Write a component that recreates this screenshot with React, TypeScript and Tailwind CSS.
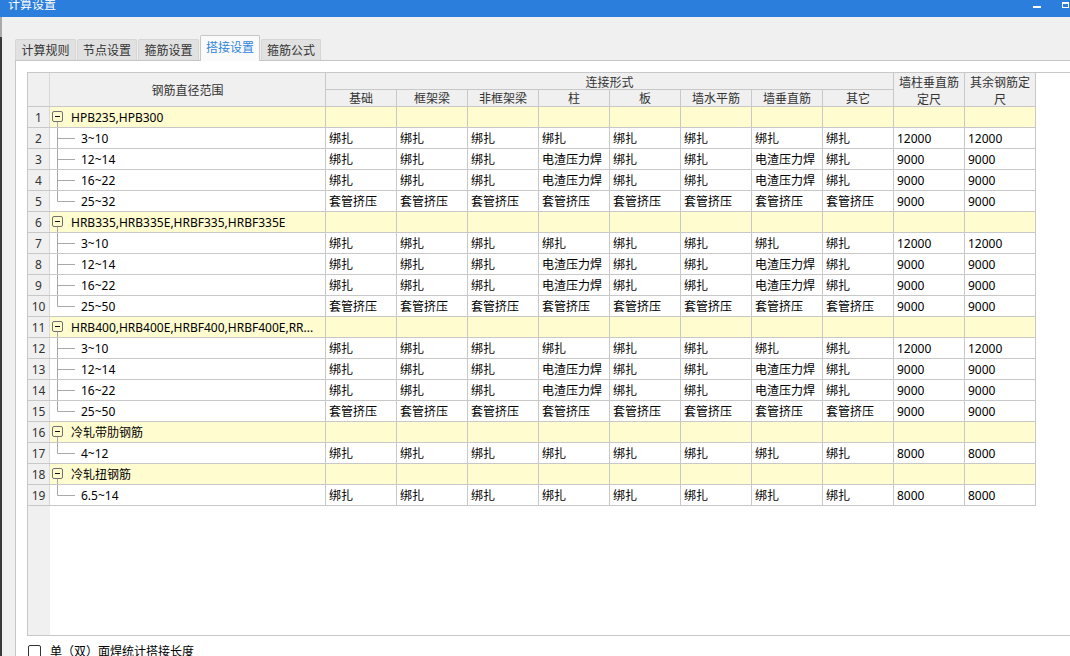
import React from "react";

const B = "绑扎";
const D = "电渣压力焊";
const T = "套管挤压";
const v1 = [B, B, B, B, B, B, B, B, "12000", "12000"];
const v2 = [B, B, B, D, B, B, D, B, "9000", "9000"];
const v4 = [T, T, T, T, T, T, T, T, "9000", "9000"];
const v8 = [B, B, B, B, B, B, B, B, "8000", "8000"];

type Row =
  | { kind: "group"; name: string }
  | { kind: "child"; name: string; last: boolean; vals: string[] };

const rows: Row[] = [
  { kind: "group", name: "HPB235,HPB300" },
  { kind: "child", name: "3~10", last: false, vals: v1 },
  { kind: "child", name: "12~14", last: false, vals: v2 },
  { kind: "child", name: "16~22", last: false, vals: v2 },
  { kind: "child", name: "25~32", last: true, vals: v4 },
  { kind: "group", name: "HRB335,HRB335E,HRBF335,HRBF335E" },
  { kind: "child", name: "3~10", last: false, vals: v1 },
  { kind: "child", name: "12~14", last: false, vals: v2 },
  { kind: "child", name: "16~22", last: false, vals: v2 },
  { kind: "child", name: "25~50", last: true, vals: v4 },
  { kind: "group", name: "HRB400,HRB400E,HRBF400,HRBF400E,RR..." },
  { kind: "child", name: "3~10", last: false, vals: v1 },
  { kind: "child", name: "12~14", last: false, vals: v2 },
  { kind: "child", name: "16~22", last: false, vals: v2 },
  { kind: "child", name: "25~50", last: true, vals: v4 },
  { kind: "group", name: "冷轧带肋钢筋" },
  { kind: "child", name: "4~12", last: true, vals: v8 },
  { kind: "group", name: "冷轧扭钢筋" },
  { kind: "child", name: "6.5~14", last: true, vals: v8 },
];

const subHeads = ["基础", "框架梁", "非框架梁", "柱", "板", "墙水平筋", "墙垂直筋", "其它"];

function GroupName({ name }: { name: string }) {
  return (
    <div className="flex h-full items-start overflow-hidden whitespace-nowrap pl-[2px]">
      <svg width="11" height="20" className="shrink-0">
        <rect x="0.5" y="4.5" width="10" height="10" rx="1.5" fill="none" stroke="#707070" />
        <line x1="3" y1="9.5" x2="8" y2="9.5" stroke="#111" />
        <line x1="5.5" y1="15" x2="5.5" y2="20" stroke="#a8a8a8" />
      </svg>
      <span className="ml-[8px] leading-[22px]">{name}</span>
    </div>
  );
}

function ChildName({ name, last }: { name: string; last: boolean }) {
  return (
    <div className="flex h-full items-start overflow-hidden whitespace-nowrap pl-[2px]">
      <svg width="24" height="20" className="shrink-0">
        <line x1="5.5" y1="0" x2="5.5" y2={last ? 10.5 : 20} stroke="#a8a8a8" />
        <line x1="5.5" y1="10.5" x2="23" y2="10.5" stroke="#a8a8a8" />
      </svg>
      <span className="ml-[5px] leading-[22px]">{name}</span>
    </div>
  );
}

function Tab({ label, active, w }: { label: string; active?: boolean; w: string }) {
  if (active) {
    return (
      <div
        className={`${w} relative z-10 h-[26px] shrink-0 rounded-t-[2px] border border-b-0 border-[#c6c6c6] bg-[#fafafa] text-center text-[12px] leading-[23px] text-[#2f86dc]`}
      >
        {label}
      </div>
    );
  }
  return (
    <div
      className={`${w} mt-[4px] h-[21px] shrink-0 rounded-t-[2px] border border-b-0 border-[#d6d6d6] bg-[#e1e1e1] text-center text-[12px] leading-[21px] text-[#333]`}
    >
      {label}
    </div>
  );
}

export default function App() {
  return (
    <div className="flex h-[656px] w-[1070px] flex-col overflow-hidden bg-[#f0f0f0] font-['Noto_Sans','Noto_Sans_CJK_SC',sans-serif] text-[12px] text-black">
      {/* title bar */}
      <div className="flex h-[17px] shrink-0 overflow-hidden bg-[#2c7edd]">
        <div className="-mt-[3px] pl-[8px] text-[12px] leading-[16px] text-white">计算设置</div>
        <div className="ml-auto flex items-start">
          <div className="mt-[6px] h-[2px] w-[8px] bg-white" />
          <div className="ml-[21px] mr-[1px] mt-[2px] h-[6px] w-[7px] border border-t-2 border-white" />
        </div>
      </div>

      <div className="flex min-h-0 flex-1">
        {/* window left edge */}
        <div className="flex w-[2px] shrink-0 flex-col">
          <div className="h-[20px] bg-[#a9a9a9]" />
          <div className="flex-1 bg-[#3a3a3a]" />
        </div>

        <div className="flex min-w-0 flex-1 flex-col pl-[13px] pt-[18px]">
          {/* tabs */}
          <div className="flex h-[26px] shrink-0 items-start gap-[1px]">
            <Tab label="计算规则" w="w-[61px]" />
            <Tab label="节点设置" w="w-[60px]" />
            <Tab label="箍筋设置" w="w-[61px]" />
            <Tab label="搭接设置" w="w-[60px]" active />
            <Tab label="箍筋公式" w="w-[60px]" />
          </div>

          {/* panel */}
          <div className="-mt-[1px] flex w-[1100px] flex-1 flex-col border-l border-t border-[#c6c6c6] bg-white pl-[11px] pt-[11px]">
            {/* grid */}
            <div className="flex h-[564px] w-[1100px] shrink-0 flex-col border-b border-l border-t border-[#c8c8c8]">
              {/* header */}
              <div className="flex h-[34px] w-fit shrink-0 border-b border-[#c8c8c8] bg-[#f0f0f0] text-[#333]">
                <div className="w-[22px] shrink-0 border-r border-[#d8d8d8]" />
                <div className="flex w-[276px] shrink-0 items-center justify-center border-r border-[#c8c8c8] pt-[2px]">
                  钢筋直径范围
                </div>
                <div className="flex w-[568px] shrink-0 flex-col border-r border-[#c8c8c8]">
                  <div className="flex h-[17px] items-center justify-center border-b border-[#c8c8c8] pt-[3px] leading-[14px]">
                    连接形式
                  </div>
                  <div className="flex h-[16px]">
                    {subHeads.map((h, i) => (
                      <div
                        key={h}
                        className={
                          i < 7
                            ? "flex w-[71px] shrink-0 items-center justify-center border-r border-[#c8c8c8] pt-[2px] leading-[14px]"
                            : "flex w-[70px] shrink-0 items-center justify-center pt-[2px] leading-[14px]"
                        }
                      >
                        {h}
                      </div>
                    ))}
                  </div>
                </div>
                <div className="flex w-[71px] shrink-0 flex-col items-center justify-center border-r border-[#c8c8c8] pt-[2px] leading-[17px]">
                  <span>墙柱垂直筋</span>
                  <span>定尺</span>
                </div>
                <div className="flex w-[71px] shrink-0 flex-col items-center justify-center border-r border-[#c8c8c8] pt-[2px] leading-[17px]">
                  <span>其余钢筋定</span>
                  <span>尺</span>
                </div>
              </div>

              {/* rows */}
              {rows.map((r, idx) => {
                const group = r.kind === "group";
                return (
                  <div key={idx} className="flex h-[21px] w-fit shrink-0 border-b border-[#c8c8c8]">
                    <div className="w-[22px] shrink-0 overflow-hidden border-r border-[#d8d8d8] bg-[#f0f0f0] text-center leading-[22px] text-[#333]">
                      {idx + 1}
                    </div>
                    <div
                      className={
                        group
                          ? "w-[276px] shrink-0 border-r border-[#c8c8c8] bg-[#fffcd0]"
                          : "w-[276px] shrink-0 border-r border-[#c8c8c8] bg-white"
                      }
                    >
                      {r.kind === "group" ? (
                        <GroupName name={r.name} />
                      ) : (
                        <ChildName name={r.name} last={r.last} />
                      )}
                    </div>
                    {Array.from({ length: 10 }).map((_, c) => (
                      <div
                        key={c}
                        className={
                          group
                            ? "w-[71px] shrink-0 border-r border-[#c8c8c8] bg-[#fffcd0]"
                            : "w-[71px] shrink-0 overflow-hidden whitespace-nowrap border-r border-[#c8c8c8] bg-white pl-[3px] leading-[22px]"
                        }
                      >
                        {r.kind === "child" ? r.vals[c] : ""}
                      </div>
                    ))}
                  </div>
                );
              })}

              {/* filler */}
              <div className="flex min-h-0 flex-1">
                <div className="w-[22px] shrink-0 bg-[#f0f0f0]" />
              </div>
            </div>

            {/* checkbox */}
            <div className="ml-[1px] mt-[8px] flex items-center">
              <div className="h-[13px] w-[13px] shrink-0 rounded-[2px] border border-[#333] bg-white" />
              <span className="ml-[9px] leading-[15px]">单（双）面焊统计搭接长度</span>
            </div>
          </div>
        </div>
      </div>
    </div>
  );
}
